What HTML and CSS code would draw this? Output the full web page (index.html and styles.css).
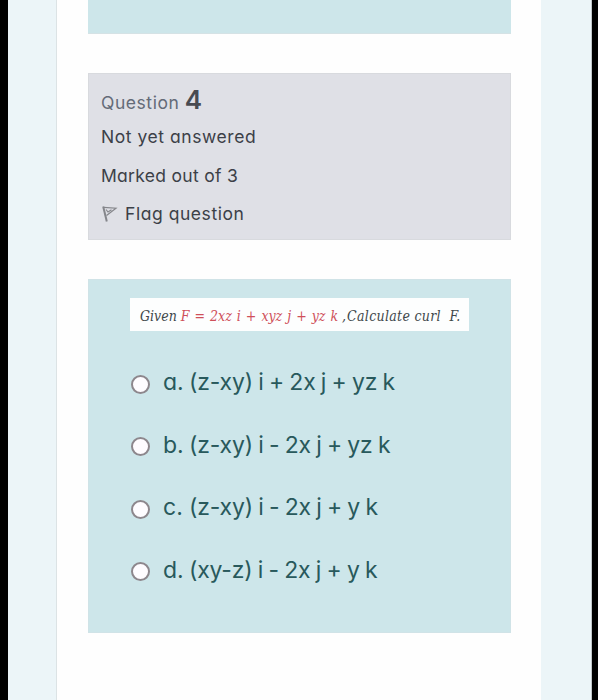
FILE: index.html
```html
<!DOCTYPE html>
<html lang="en">

<head>
  <meta charset="utf-8">
  <title>Question 4</title>
  <link rel="stylesheet" href="styles.css">
</head>

<body>
  <div class="page">
    <div class="content">
      <div class="previous"></div>

      <div class="info">
        <h3 class="number">Question <span>4</span></h3>
        <div class="state">Not yet answered</div>
        <div class="grade">Marked out of 3</div>
        <div class="flag">
          <svg width="17" height="18" viewBox="0 0 17 18" fill="none" stroke="#85868b">
            <path d="M2.2 1.5L5.8 16.5" stroke-width="2" />
            <path d="M2.5 2.3L15 3.2L5.5 10.5M5 4.5L7 7L10.5 4.7" stroke-width="1.2" />
          </svg>
          <span>Flag question</span>
        </div>
      </div>

      <div class="question">
        <div class="formula">Given <span>F = 2xz i + xyz j + yz k</span> ,<em>Calculate curl&nbsp; F.</em></div>
        <div class="answers">
          <label class="answer"><input type="radio" name="answer"><span class="letter">a.</span><span class="value">(z-xy) i + 2x j + yz k</span></label>
          <label class="answer"><input type="radio" name="answer"><span class="letter">b.</span><span class="value">(z-xy) i - 2x j + yz k</span></label>
          <label class="answer"><input type="radio" name="answer"><span class="letter">c.</span><span class="value">(z-xy) i - 2x j + y k</span></label>
          <label class="answer"><input type="radio" name="answer"><span class="letter">d.</span><span class="value">(xy-z) i - 2x j + y k</span></label>
        </div>
      </div>
    </div>
  </div>
</body>

</html>
```
FILE: styles.css
```css
* {
  box-sizing: border-box;
}

body {
  margin: 0;
  height: 700px;
  overflow: hidden;
  border-left: 8px solid #000;
  border-right: 6px solid #000;
  background: #ecf5f8;
  font-family: Inter, "Open Sans", sans-serif;
  font-feature-settings: "cv11";
}

.page {
  height: 700px;
  padding: 0 50px 0 48px;
  border-right: 1px solid #bfc5c8;
}

.content {
  height: 700px;
  padding: 0 30px 0 31px;
  border-left: 1px solid #dce3e5;
  background: #fefefe;
}

.previous {
  height: 34px;
  margin-bottom: 39px;
  background: #cde6ea;
  border-bottom: 1px solid #d5e2e5;
}

.info {
  height: 167px;
  margin-bottom: 39px;
  padding: 10px 13px;
  border: 1px solid #d8dade;
  background: #dfe0e6;
  color: #3c4048;
  font-size: 17.5px;
  letter-spacing: 0.55px;
}

.number {
  margin: 0 0 6px -1px;
  height: 31px;
  line-height: 31px;
  font-size: 17.5px;
  font-weight: 400;
  color: #646b78;
}

.number span {
  font-size: 26px;
  font-weight: 600;
  color: #484b51;
}

.state,
.grade,
.flag {
  height: 38.5px;
  line-height: 32px;
  margin-left: -1px;
}

.grade {
  letter-spacing: 0.3px;
}

.flag {
  display: flex;
  gap: 7px;
}

.flag svg {
  margin-top: 7px;
}

.question {
  height: 354px;
  padding: 18px 41px;
  border: 1px solid #d0e3e7;
  background: #cde6ea;
}

.formula {
  height: 33px;
  width: 339px;
  padding-left: 10px;
  background: #fdfefe;
  color: #40484b;
  font: italic 14px/36px "DejaVu Serif", serif;
  font-stretch: condensed;
  white-space: nowrap;
}

.formula span {
  color: #cf505a;
  word-spacing: 1px;
}

.formula em {
  margin-left: 1px;
  letter-spacing: 0.3px;
}

.answers {
  margin-top: 20px;
}

.answer {
  display: flex;
  align-items: center;
  height: 62.5px;
  color: #28595c;
  font-size: 23px;
  white-space: nowrap;
}

.answer input {
  appearance: none;
  width: 19px;
  height: 19px;
  margin: 4px 13px 0 1px;
  border: 2px solid #8d878d;
  border-radius: 50%;
  background: #fefcff;
}

.letter {
  width: 26px;
}

.value {
  letter-spacing: -0.2px;
  word-spacing: -0.9px;
}
```
